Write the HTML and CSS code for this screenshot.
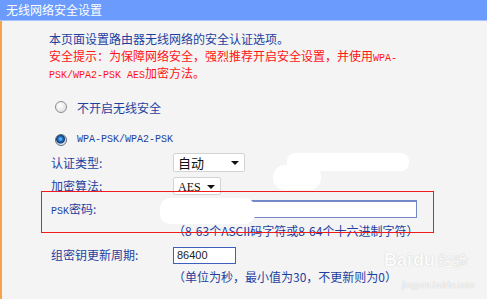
FILE: index.html
```html
<!DOCTYPE html>
<html lang="zh-CN">
  <head>
    <meta charset="UTF-8" />
    <title>无线网络安全设置</title>
    <link rel="stylesheet" href="styles.css">
  </head>
  <body>
    <!-- TITLE BAR -->
    <header class="title-bar">无线网络安全设置</header>

    <!-- CONTENT -->
    <main class="panel">
      <p class="intro">本页面设置路由器无线网络的安全认证选项。</p>
      <p class="warning">
        安全提示：为保障网络安全，强烈推荐开启安全设置，并使用<span class="mono">WPA-</span><br>
        <span class="mono">PSK/WPA2-PSK AES</span>加密方法。
      </p>

      <div class="radio-row first">
        <span class="radio"></span>
        <span>不开启无线安全</span>
      </div>
      <div class="radio-row second">
        <span class="radio checked"></span>
        <span class="mono">WPA-PSK/WPA2-PSK</span>
      </div>

      <div class="form">
        <div class="row auth">
          <label>认证类型:</label>
          <div class="select wide"><span>自动</span><i class="arrow"></i></div>
        </div>
        <div class="row enc">
          <label>加密算法:</label>
          <div class="select narrow"><span class="serif">AES</span><i class="arrow"></i></div>
        </div>
        <div class="row psk">
          <label><span class="mono">PSK</span>密码:</label>
          <div class="input long"></div>
        </div>
        <div class="hint">（8-63个ASCII码字符或8-64个十六进制字符）</div>
        <div class="row key">
          <label>组密钥更新周期:</label>
          <div class="input short">86400</div>
        </div>
        <div class="hint">（单位为秒，最小值为30，不更新则为0）</div>
      </div>

      <!-- OVERLAYS: redaction blobs, annotation box, watermark -->
      <div class="blob blob-a"></div>
      <div class="blob blob-b"></div>
      <div class="blob blob-c"></div>
      <div class="mark-box"></div>
      <div class="watermark">
        <div class="wm-logo">Bai<span class="wm-du">du</span><span class="wm-cn">经验</span></div>
        <div class="wm-url">jingyan.baidu.com</div>
      </div>
    </main>
  </body>
</html>
```

FILE: styles.css
```css
/* RESET */
html,
body {
  margin: 0;
  padding: 0;
}
*,
*::before,
*::after {
  box-sizing: border-box;
}

body {
  font-family: "Noto Sans CJK SC", "Noto Sans", sans-serif;
  font-size: 12px;
  background-color: #f4f4f4;
  color: #1f3f9f;
  width: 487px;
  height: 299px;
  overflow: hidden;
}

/* TITLE BAR */
.title-bar {
  height: 21px;
  line-height: 19px;
  padding-left: 6px;
  background-color: #6a9bfd;
  border-bottom: 1px solid #a9c3fb;
  color: #fff;
  font-size: 12px;
}

/* PANEL */
.panel {
  position: relative;
  height: 278px;
  border-left: 2px solid #f7a449;
  padding: 9px 0 0 47px;
}

.intro,
.warning {
  margin: 0;
  line-height: 17px;
}
.intro {
  height: 17px;
}
.warning {
  height: 34px;
  color: #ff1414;
}

/* half-width latin text, kept from growing the line box */
.mono {
  font-family: "Liberation Mono", monospace;
  font-size: 10px;
  line-height: 0;
}
.serif {
  font-family: "Liberation Serif", serif;
  font-size: 12px;
}

/* RADIOS */
.radio-row {
  display: flex;
  align-items: center;
  gap: 10px;
  height: 20px;
  padding-left: 6px;
}
.radio-row.first {
  margin-top: 16px;
}
.radio-row.second {
  margin-top: 13px;
}
.radio {
  flex: none;
  width: 12px;
  height: 12px;
  border-radius: 50%;
  border: 1px solid #8c8c8c;
  background: radial-gradient(circle at 40% 35%, #ffffff, #d8d8d8);
}
.radio.checked {
  border-color: #5a6a7c;
  background: radial-gradient(circle at 45% 40%, #8fd0ff 0, #2a7ccf 2px, #0d3a78 4px, #d6dde6 5px, #f2f2f2 6px);
}

/* FORM */
.form {
  display: flex;
  flex-direction: column;
}
.row {
  display: grid;
  grid-template-columns: 124px auto;
  align-items: center;
  height: 20px;
}
.row label {
  padding-left: 2px;
  line-height: 18px;
}
.row.auth {
  margin-top: 2px;
  height: 21px;
}
.row.enc,
.row.psk {
  margin-top: 3px;
}
.row.key {
  margin-top: 2px;
}

.select {
  position: relative;
  height: 19px;
  background: #fff;
  border: 1px solid #d3d3d3;
  border-radius: 2px;
  color: #111;
  font-size: 13px;
  line-height: 17px;
  padding-left: 4px;
}
.select.wide {
  width: 72px;
}
.select.narrow {
  width: 48px;
  height: 18px;
  line-height: 16px;
}
.arrow {
  position: absolute;
  right: 5px;
  top: 7px;
  border-left: 4px solid transparent;
  border-right: 4px solid transparent;
  border-top: 4px solid #111;
}

.input {
  height: 18px;
  background: #fff;
  border: 1px solid #7488c8;
  border-top-width: 2px;
  color: #222;
  font-family: "Liberation Sans", sans-serif;
  font-size: 11px;
  line-height: 14px;
  padding-left: 3px;
}
.input.long {
  width: 244px;
}
.input.short {
  width: 63px;
  height: 17px;
  border: 1px solid #3f5fbf;
}

.hint {
  line-height: 24px;
  height: 24px;
  padding-left: 124px;
}

/* OVERLAYS */
.blob {
  position: absolute;
  background: #fff;
}
.blob-a {
  left: 285px;
  top: 132px;
  width: 122px;
  height: 18px;
  border-radius: 8px;
}
.blob-b {
  left: 271px;
  top: 144px;
  width: 48px;
  height: 25px;
  border-radius: 12px;
}
.blob-c {
  left: 158px;
  top: 177px;
  width: 95px;
  height: 26px;
  border-radius: 10px;
}

.mark-box {
  position: absolute;
  left: 39px;
  top: 170px;
  width: 393px;
  height: 42px;
  border: 1px solid #f01c1c;
}

.watermark {
  position: absolute;
  left: 382px;
  top: 229px;
  color: #fbfbfb;
  text-shadow: 0 0 1px #cfcfcf, 0 0 1px #cfcfcf;
}
.wm-logo {
  font-family: "Liberation Sans", sans-serif;
  font-size: 18px;
  font-weight: bold;
  line-height: 20px;
}
.wm-du {
  margin-left: 1px;
}
.wm-cn {
  font-family: "Noto Sans CJK SC", sans-serif;
  font-size: 15px;
  font-weight: normal;
  margin-left: 3px;
}
.wm-url {
  font-family: "Liberation Sans", sans-serif;
  font-size: 9px;
  line-height: 12px;
  margin: 9px 0 0 18px;
}
```
